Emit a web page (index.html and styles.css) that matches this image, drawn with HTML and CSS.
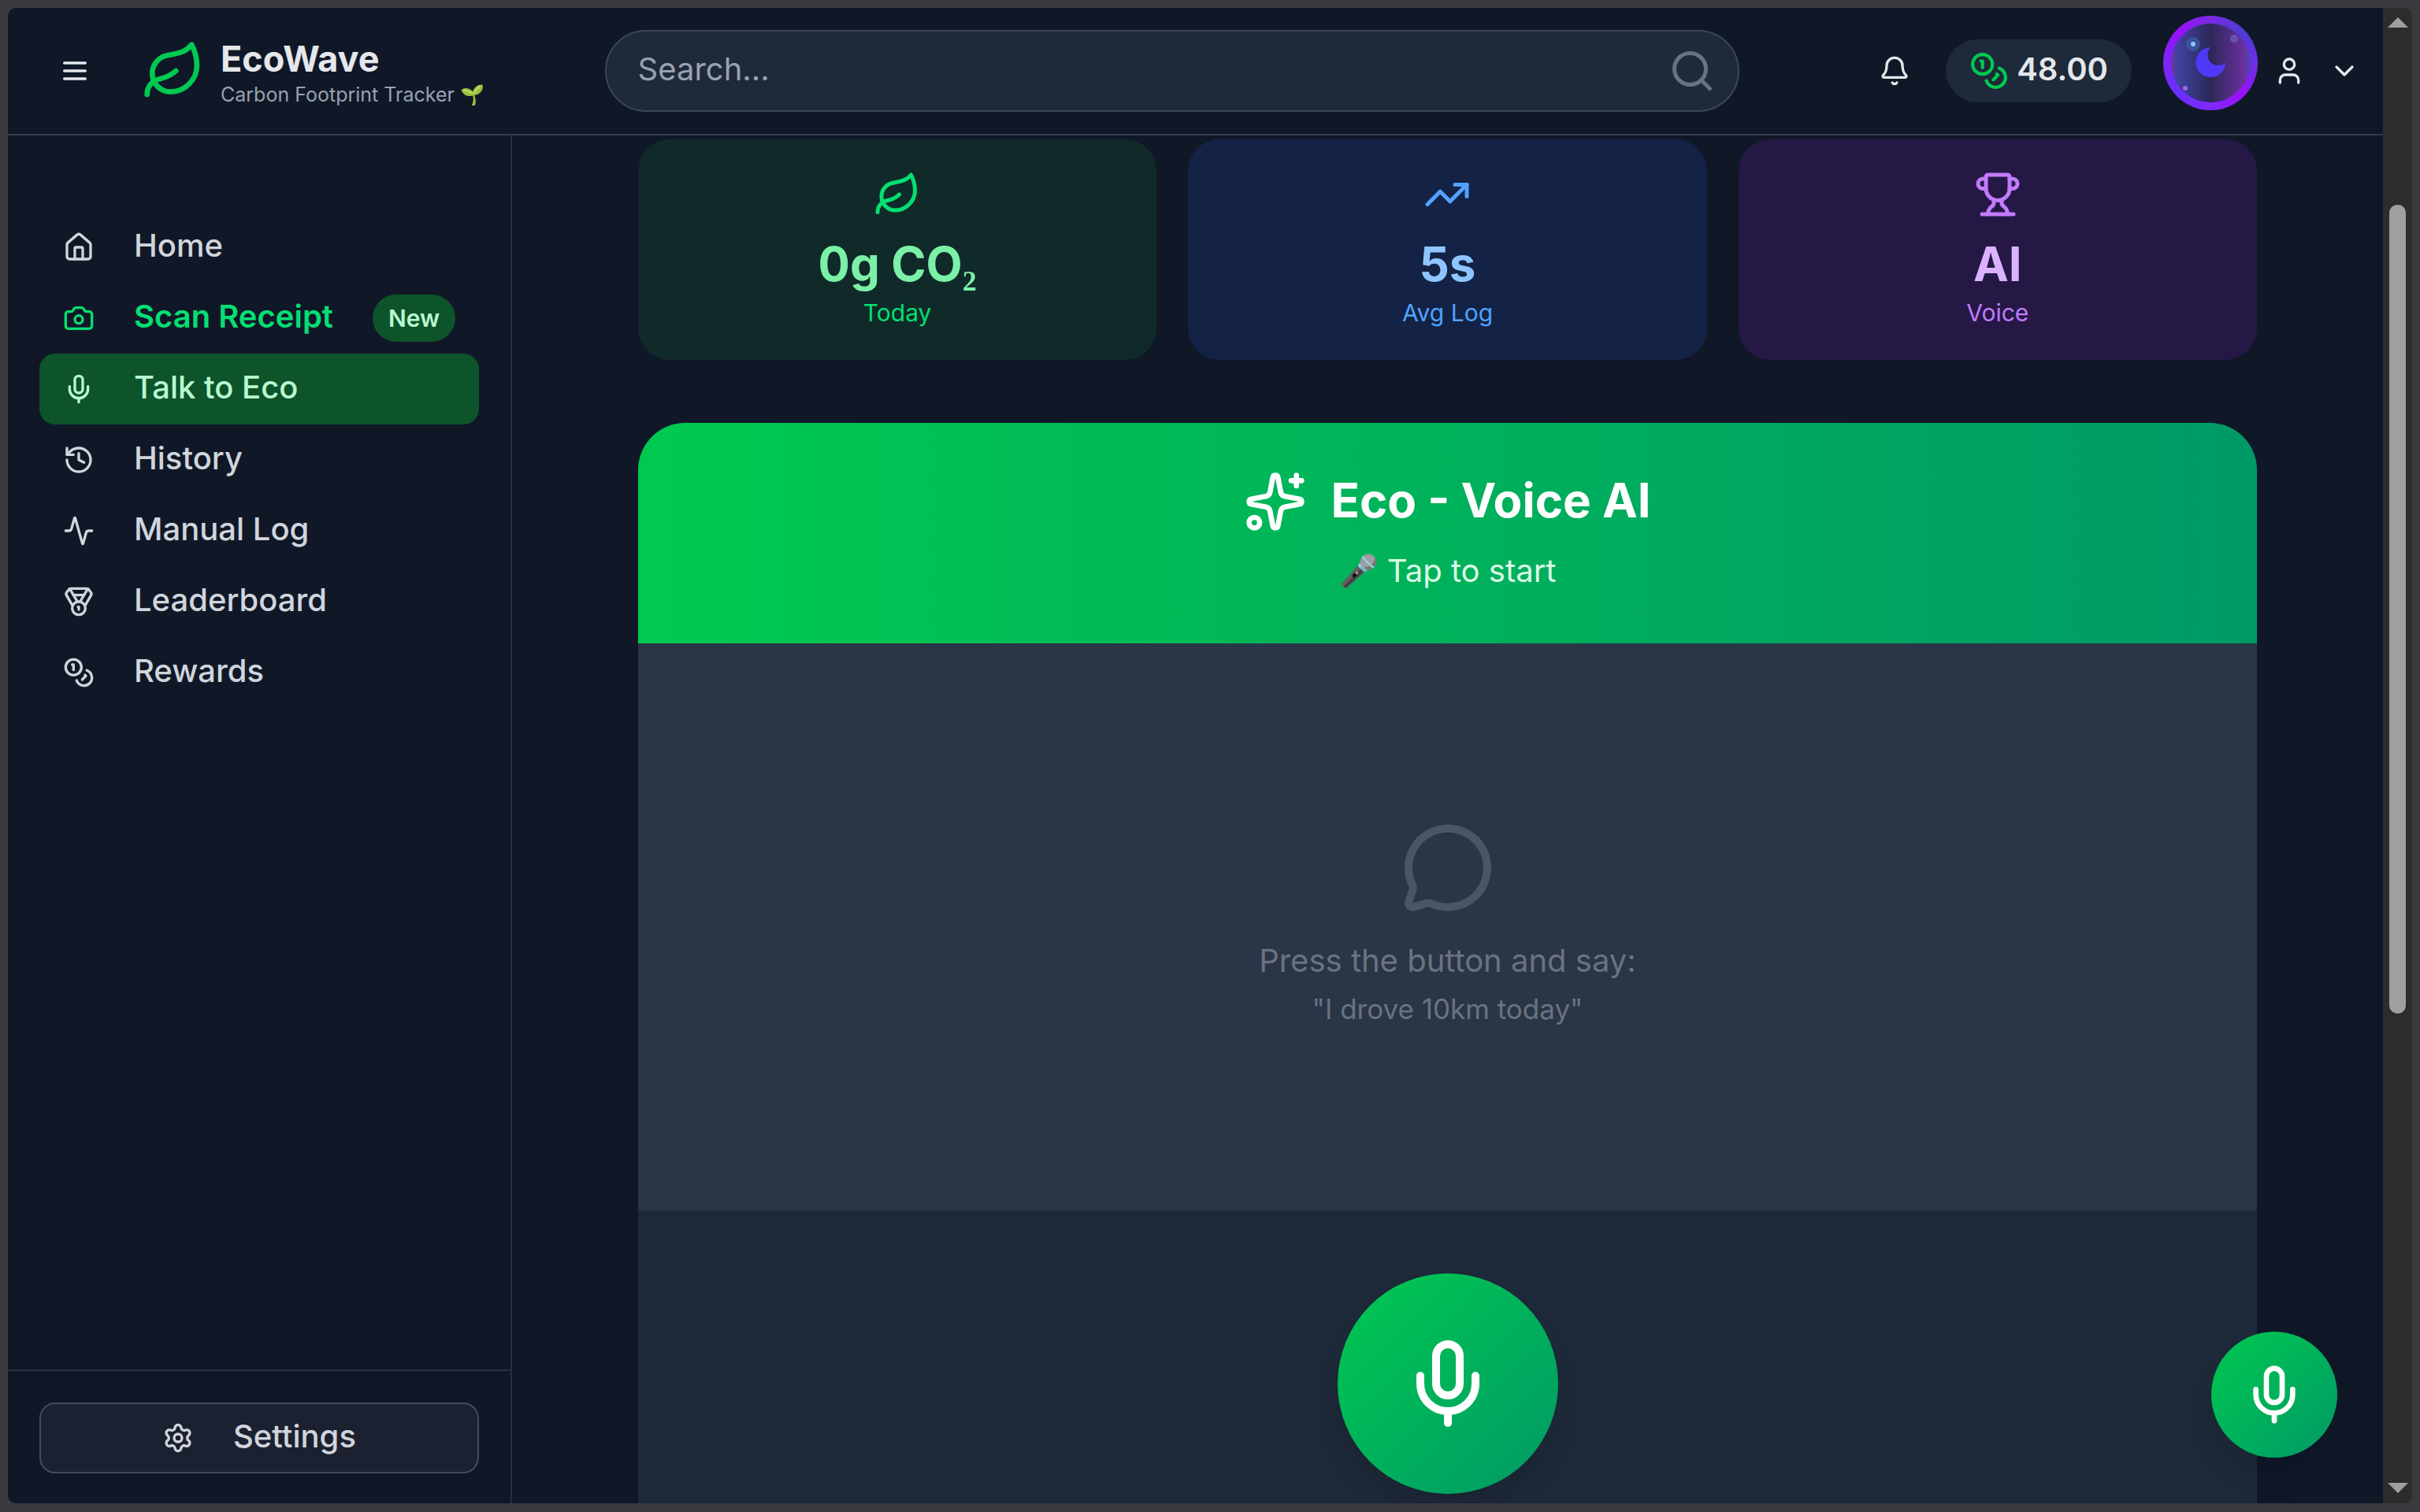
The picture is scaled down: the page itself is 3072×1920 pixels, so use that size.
FILE: index.html
```
<!DOCTYPE html>
<html lang="en">
<head>
    <meta charset="UTF-8">
    <meta name="viewport" content="width=device-width, initial-scale=1.0">
    <title>EcoWave - Carbon Footprint Tracker</title>
    <link rel="stylesheet" href="styles.css">
</head>
<body>

<!-- Icons used more than once -->
<svg class="sprite" aria-hidden="true">
    <symbol id="icon-leaf" viewBox="0 0 24 24">
        <path d="M11 20A7 7 0 0 1 9.8 6.1C15.5 5 17 4.48 19 2c1 2 2 4.18 2 8 0 5.5-4.78 10-10 10Z"/>
        <path d="M2 21c0-3 1.85-5.36 5.08-6C9.5 14.52 12 13 13 12"/>
    </symbol>
    <symbol id="icon-mic" viewBox="0 0 24 24">
        <path d="M12 19v3"/>
        <path d="M19 10v2a7 7 0 0 1-14 0v-2"/>
        <rect x="9" y="2" width="6" height="13" rx="3"/>
    </symbol>
    <symbol id="icon-coins" viewBox="0 0 24 24">
        <circle cx="8" cy="8" r="6"/>
        <path d="M18.09 10.37A6 6 0 1 1 10.34 18"/>
        <path d="M7 6h1v4"/>
        <path d="m16.71 13.88.7.71-2.82 2.82"/>
    </symbol>
</svg>

<div class="window">
    <div class="app">
        <header class="topbar">
            <div class="brand">
                <button class="icon-button" type="button" aria-label="Toggle menu">
                    <svg class="icon" viewBox="0 0 24 24"><path d="M4 6h16M4 12h16M4 18h16"/></svg>
                </button>
                <a class="logo" href="#home">
                    <svg class="icon logo-icon"><use href="#icon-leaf"/></svg>
                    <span class="logo-text">
                        <span class="logo-name">EcoWave</span>
                        <span class="logo-tagline">Carbon Footprint Tracker 🌱</span>
                    </span>
                </a>
            </div>

            <form class="search" role="search">
                <input class="label" type="search" placeholder="Search..." aria-label="Search">
                <button class="search-button" type="button" aria-label="Submit search">
                    <svg class="icon icon-card" viewBox="0 0 24 24"><circle cx="11" cy="11" r="8"/><path d="m21 21-4.34-4.34"/></svg>
                </button>
            </form>

            <div class="actions">
                <button class="icon-button" type="button" aria-label="Notifications">
                    <svg class="icon" viewBox="0 0 24 24">
                        <path d="M10.268 21a2 2 0 0 0 3.464 0"/>
                        <path d="M3.262 15.326A1 1 0 0 0 4 17h16a1 1 0 0 0 .74-1.673C19.41 13.956 18 12.499 18 8A6 6 0 0 0 6 8c0 4.499-1.411 5.956-2.738 7.326"/>
                    </svg>
                </button>
                <div class="balance">
                    <svg class="icon balance-icon"><use href="#icon-coins"/></svg>
                    <span class="label">48.00</span>
                </div>
                <button class="theme-toggle" type="button" aria-label="Toggle theme">
                    <svg viewBox="0 0 120 120">
                        <defs>
                            <linearGradient id="night">
                                <stop offset="0" stop-color="#4547b0"/>
                                <stop offset="0.5" stop-color="#2b2858"/>
                                <stop offset="1" stop-color="#7432a8"/>
                            </linearGradient>
                        </defs>
                        <circle cx="60" cy="60" r="50" fill="url(#night)"/>
                        <path d="M14 46q-5 14 0 28" fill="none" stroke="#7a2e9c" stroke-width="3"/>
                        <path d="M106 46q5 14 0 28" fill="none" stroke="#4547b0" stroke-width="3"/>
                        <circle cx="38" cy="36" r="9" fill="#3f6fb5" opacity="0.5"/>
                        <circle cx="38" cy="36" r="3" fill="#8ec5ff"/>
                        <circle cx="90" cy="29" r="5" fill="#6a5cc0" opacity="0.8"/>
                        <circle cx="28" cy="92" r="3" fill="#a06be0"/>
                        <path transform="translate(35 34) scale(2.1)" fill="#4f39f6" d="M12 3a6 6 0 0 0 9 9 9 9 0 1 1-9-9Z"/>
                    </svg>
                </button>
                <button class="account" type="button" aria-label="Account menu">
                    <svg class="icon" viewBox="0 0 24 24"><path d="M19 21v-2a4 4 0 0 0-4-4H9a4 4 0 0 0-4 4v2"/><circle cx="12" cy="7" r="4"/></svg>
                    <svg class="icon" viewBox="0 0 24 24"><path d="m6 9 6 6 6-6"/></svg>
                </button>
            </div>
        </header>

        <div class="layout">
            <aside class="sidebar">
                <nav>
                    <ul class="menu">
                        <li><a href="#home">
                            <svg class="icon" viewBox="0 0 24 24"><path d="M15 21v-8a1 1 0 0 0-1-1h-4a1 1 0 0 0-1 1v8"/><path d="M3 10a2 2 0 0 1 .709-1.528l7-5.999a2 2 0 0 1 2.582 0l7 5.999A2 2 0 0 1 21 10v9a2 2 0 0 1-2 2H5a2 2 0 0 1-2-2z"/></svg>
                            <span class="label">Home</span>
                        </a></li>
                        <li><a class="highlight" href="#scan">
                            <svg class="icon" viewBox="0 0 24 24"><path d="M13.997 4a2 2 0 0 1 1.76 1.05l.486.9A2 2 0 0 0 18.003 7H20a2 2 0 0 1 2 2v9a2 2 0 0 1-2 2H4a2 2 0 0 1-2-2V9a2 2 0 0 1 2-2h1.997a2 2 0 0 0 1.759-1.048l.489-.904A2 2 0 0 1 10.004 4z"/><circle cx="12" cy="13" r="3"/></svg>
                            <span class="label">Scan Receipt</span>
                            <span class="badge">New</span>
                        </a></li>
                        <li><a class="active" href="#talk" aria-current="page">
                            <svg class="icon"><use href="#icon-mic"/></svg>
                            <span class="label">Talk to Eco</span>
                        </a></li>
                        <li><a href="#history">
                            <svg class="icon" viewBox="0 0 24 24"><path d="M3 12a9 9 0 1 0 9-9 9.75 9.75 0 0 0-6.74 2.74L3 8"/><path d="M3 3v5h5"/><path d="M12 7v5l4 2"/></svg>
                            <span class="label">History</span>
                        </a></li>
                        <li><a href="#log">
                            <svg class="icon" viewBox="0 0 24 24"><path d="M22 12h-2.48a2 2 0 0 0-1.93 1.46l-2.35 8.36a.25.25 0 0 1-.48 0L9.24 2.18a.25.25 0 0 0-.48 0l-2.35 8.36A2 2 0 0 1 4.49 12H2"/></svg>
                            <span class="label">Manual Log</span>
                        </a></li>
                        <li><a href="#leaderboard">
                            <svg class="icon" viewBox="0 0 24 24"><path d="M7.21 15 2.66 7.14a2 2 0 0 1 .13-2.2L4.4 2.8A2 2 0 0 1 6 2h12a2 2 0 0 1 1.6.8l1.6 2.14a2 2 0 0 1 .14 2.2L16.79 15"/><path d="M11 12 5.12 2.2"/><path d="m13 12 5.88-9.8"/><path d="M8 7h8"/><circle cx="12" cy="17" r="5"/><path d="M12 18v-2h-.5"/></svg>
                            <span class="label">Leaderboard</span>
                        </a></li>
                        <li><a href="#rewards">
                            <svg class="icon"><use href="#icon-coins"/></svg>
                            <span class="label">Rewards</span>
                        </a></li>
                    </ul>
                </nav>
                <div class="sidebar-footer">
                    <button class="settings" type="button">
                        <svg class="icon" viewBox="0 0 24 24"><path d="M9.671 4.136a2.34 2.34 0 0 1 4.659 0 2.34 2.34 0 0 0 3.319 1.915 2.34 2.34 0 0 1 2.33 4.033 2.34 2.34 0 0 0 0 3.831 2.34 2.34 0 0 1-2.33 4.033 2.34 2.34 0 0 0-3.319 1.915 2.34 2.34 0 0 1-4.659 0 2.34 2.34 0 0 0-3.32-1.915 2.34 2.34 0 0 1-2.33-4.033 2.34 2.34 0 0 0 0-3.831A2.34 2.34 0 0 1 6.35 6.051a2.34 2.34 0 0 0 3.319-1.915"/><circle cx="12" cy="12" r="3"/></svg>
                        <span class="label">Settings</span>
                    </button>
                </div>
            </aside>

            <main class="content">
                <section class="stats">
                    <div class="stat stat-green">
                        <svg class="icon icon-card"><use href="#icon-leaf"/></svg>
                        <p class="stat-value">0g CO<span class="subscript">₂</span></p>
                        <p class="stat-label">Today</p>
                    </div>
                    <div class="stat stat-blue">
                        <svg class="icon icon-card" viewBox="0 0 24 24"><path d="M16 7h6v6"/><path d="m22 7-8.5 8.5-5-5L2 17"/></svg>
                        <p class="stat-value">5s</p>
                        <p class="stat-label">Avg Log</p>
                    </div>
                    <div class="stat stat-purple">
                        <svg class="icon icon-card" viewBox="0 0 24 24"><path d="M10 14.66v1.626a2 2 0 0 1-.976 1.696A5 5 0 0 0 7 21.978"/><path d="M14 14.66v1.626a2 2 0 0 0 .976 1.696A5 5 0 0 1 17 21.978"/><path d="M18 9h1.5a1 1 0 0 0 0-5H18"/><path d="M4 22h16"/><path d="M6 9a6 6 0 0 0 12 0V3a1 1 0 0 0-1-1H7a1 1 0 0 0-1 1z"/><path d="M6 9H4.5a1 1 0 0 1 0-5H6"/></svg>
                        <p class="stat-value">AI</p>
                        <p class="stat-label">Voice</p>
                    </div>
                </section>

                <section class="voice">
                    <div class="voice-header">
                        <h1>
                            <svg class="icon icon-large" viewBox="0 0 24 24"><path d="M11.017 2.814a1 1 0 0 1 1.966 0l1.051 5.558a2 2 0 0 0 1.594 1.594l5.558 1.051a1 1 0 0 1 0 1.966l-5.558 1.051a2 2 0 0 0-1.594 1.594l-1.051 5.558a1 1 0 0 1-1.966 0l-1.051-5.558a2 2 0 0 0-1.594-1.594l-5.558-1.051a1 1 0 0 1 0-1.966l5.558-1.051a2 2 0 0 0 1.594-1.594z"/><path d="M20 2v4"/><path d="M22 4h-4"/><circle cx="4" cy="20" r="2"/></svg>
                            <span class="label">Eco - Voice AI</span>
                        </h1>
                        <p>🎤 Tap to start</p>
                    </div>
                    <div class="voice-empty">
                        <svg class="icon icon-huge" viewBox="0 0 24 24"><path d="M2.992 16.342a2 2 0 0 1 .094 1.167l-1.065 3.29a1 1 0 0 0 1.236 1.168l3.413-.998a2 2 0 0 1 1.099.092 10 10 0 1 0-4.777-4.719"/></svg>
                        <p>Press the button and say:</p>
                        <p class="hint">"I drove 10km today"</p>
                    </div>
                    <div class="voice-controls">
                        <button class="mic-button mic-main" type="button" aria-label="Start talking">
                            <svg class="icon icon-huge"><use href="#icon-mic"/></svg>
                        </button>
                    </div>
                </section>
            </main>
        </div>

        <button class="mic-button mic-floating" type="button" aria-label="Talk to Eco">
            <svg class="icon icon-large"><use href="#icon-mic"/></svg>
        </button>
    </div>

    <div class="scrollbar" aria-hidden="true">
        <svg viewBox="0 0 26 13"><path d="M13 0 26 13H0z"/></svg>
        <div class="scroll-track"><div class="scroll-thumb"></div></div>
        <svg viewBox="0 0 26 13"><path d="M0 0h26L13 13z"/></svg>
    </div>
</div>

</body>
</html>
```
FILE: styles.css
```
* {
    box-sizing: border-box;
}
body {
    margin: 0;
    background: #3b3a3e;
    color: #e5e7eb;
    font-family: Inter, sans-serif;
    font-size: 40px;
    line-height: 60px;
}
p, h1, ul {
    margin: 0;
    padding: 0;
}
a {
    color: inherit;
    text-decoration: none;
}
button {
    display: flex;
    align-items: center;
    justify-content: center;
    padding: 0;
    border: 0;
    background: none;
    color: inherit;
    font: inherit;
    cursor: pointer;
}
.sprite {
    display: none;
}

/* Icons */
.icon {
    width: 40px;
    height: 40px;
    flex-shrink: 0;
    fill: none;
    stroke: currentColor;
    stroke-width: 2;
    stroke-linecap: round;
    stroke-linejoin: round;
}
.icon-card {
    width: 60px;
    height: 60px;
}
.icon-large {
    width: 80px;
    height: 80px;
}
.icon-huge {
    width: 120px;
    height: 120px;
}

/* Text that sits beside an icon */
.label {
    padding: 0 0 4px;
    white-space: nowrap;
}

/* Window */
.window {
    display: flex;
    height: 100vh;
    padding: 10px 10px 11px;
}
.app {
    position: relative;
    display: flex;
    flex-direction: column;
    flex: 1;
    min-width: 0;
    overflow: hidden;
    background: #101828;
    border-radius: 10px 0 0 10px;
}

/* Top bar */
.topbar {
    display: flex;
    align-items: center;
    justify-content: space-between;
    flex-shrink: 0;
    height: 162px;
    padding: 0 29px 0 40px;
    border-bottom: 2px solid #323d4e;
}
.brand, .logo, .actions {
    display: flex;
    align-items: center;
}
.brand {
    gap: 40px;
}
.icon-button {
    width: 90px;
    height: 90px;
}
.logo {
    gap: 20px;
}
.logo-icon {
    width: 80px;
    height: 80px;
    color: #00c950;
}
.logo-text {
    display: flex;
    flex-direction: column;
    padding-top: 10px;
}
.logo-name {
    font-size: 45px;
    font-weight: 700;
    line-height: 50px;
}
.logo-tagline {
    color: #99a1af;
    font-size: 25px;
    line-height: 40px;
    white-space: nowrap;
}
.search {
    display: flex;
    align-items: center;
    width: 1440px;
    height: 104px;
    padding: 0 28px 0 40px;
    background: #1e2939;
    border: 2px solid #3b4656;
    border-radius: 52px;
}
.search input {
    flex: 1;
    min-width: 0;
    border: 0;
    outline: 0;
    background: none;
    color: inherit;
    font: inherit;
}
.search input::placeholder {
    color: #99a1af;
}
.search-button {
    color: #6a7282;
}
.balance {
    display: flex;
    align-items: center;
    gap: 10px;
    height: 80px;
    margin: 0 40px 0 20px;
    padding: 0 30px;
    background: #1e2939;
    border-radius: 40px;
    font-weight: 600;
}
.balance-icon {
    width: 50px;
    height: 50px;
    color: #00c950;
}
.theme-toggle {
    width: 120px;
    height: 120px;
    margin: 0 20px 20px 0;
    border-radius: 50%;
    background: conic-gradient(#7a2be0, #4f3bd6 45deg, #6b30e0 90deg, #9810fa 135deg, #7f2af8 180deg, #6a2fff 225deg, #7a28f8 270deg, #9a10fa 315deg, #7a2be0);
}
.theme-toggle svg {
    width: 120px;
    height: 120px;
}
.account {
    gap: 30px;
}

/* Sidebar */
.layout {
    display: flex;
    flex: 1;
    min-height: 0;
}
.sidebar {
    display: flex;
    flex-direction: column;
    justify-content: space-between;
    flex-shrink: 0;
    width: 640px;
    border-right: 2px solid #263143;
}
.menu {
    padding: 97px 40px 0;
    list-style: none;
}
.menu a {
    display: flex;
    align-items: center;
    gap: 50px;
    height: 90px;
    padding: 0 30px;
    border-radius: 20px;
    color: #d1d5dc;
    font-weight: 500;
}
.menu .highlight {
    color: #05df72;
    font-weight: 600;
}
.menu .active {
    background: #0d542b;
    color: #b9f8cf;
}
.badge {
    margin-left: auto;
    padding: 0 20px;
    border-radius: 30px;
    background: #0d542b;
    color: #b9f8cf;
    font-size: 30px;
    font-weight: 600;
}
.sidebar-footer {
    padding: 40px 40px 38px;
    border-top: 2px solid #263143;
}
.settings {
    gap: 50px;
    width: 100%;
    height: 90px;
    background: #1b2130;
    border: 2px solid #414b5a;
    border-radius: 20px;
    color: #d1d5dc;
    font-weight: 500;
}

/* Content */
.content {
    display: flex;
    flex-direction: column;
    gap: 80px;
    flex: 1;
    min-width: 0;
    overflow: hidden;
    padding: 5px 160px 0;
}
.stats {
    display: grid;
    grid-template-columns: repeat(3, 1fr);
    gap: 40px;
}
.stat {
    display: flex;
    flex-direction: column;
    align-items: center;
    padding: 40px;
    border-radius: 40px;
}
.stat-value {
    margin: 18px 0 2px;
    font-size: 60px;
    font-weight: 700;
    line-height: 80px;
}
.stat-label {
    font-size: 30px;
    line-height: 40px;
}
.subscript {
    font-family: "Liberation Serif", serif;
    line-height: 1;
}
.stat-green {
    background: #102a29;
    color: #05df72;
}
.stat-green .stat-value {
    color: #7bf1a8;
}
.stat-blue {
    background: #132245;
    color: #51a2ff;
}
.stat-blue .stat-value {
    color: #8ec5ff;
}
.stat-purple {
    background: #251845;
    color: #c27aff;
}
.stat-purple .stat-value {
    color: #dab2ff;
}

/* Voice assistant */
.voice {
    border-radius: 60px;
    background: #1e2939;
}
.voice-header {
    padding: 60px 60px 62px;
    border-radius: 60px 60px 0 0;
    background: linear-gradient(to right, #00c950, #009966);
    color: #dcfce7;
    text-align: center;
}
.voice-header h1 {
    display: flex;
    align-items: center;
    justify-content: center;
    gap: 30px;
    height: 80px;
    margin-bottom: 18px;
    color: #fff;
    font-size: 60px;
    font-weight: 700;
    line-height: 80px;
}
.voice-empty {
    display: flex;
    flex-direction: column;
    align-items: center;
    justify-content: center;
    gap: 6px;
    height: 720px;
    padding-bottom: 6px;
    background: #2a3546;
    color: #6a7282;
}
.voice-empty .icon {
    margin-bottom: 22px;
    color: #4a5565;
}
.hint {
    font-size: 35px;
    line-height: 50px;
}
.voice-controls {
    display: flex;
    justify-content: center;
    padding: 80px;
}
.mic-button {
    border-radius: 50%;
    background: linear-gradient(to bottom right, #00c950, #009966);
    color: #fff;
    box-shadow: 0 25px 40px -8px rgba(0, 0, 0, 0.15);
}
.mic-main {
    width: 280px;
    height: 280px;
}
.mic-floating {
    position: absolute;
    right: 58px;
    bottom: 58px;
    width: 160px;
    height: 160px;
}

/* Scrollbar */
.scrollbar {
    display: flex;
    flex-direction: column;
    align-items: center;
    flex-shrink: 0;
    width: 37px;
    padding: 12px 0 13px;
    background: #2c2c2c;
    border-radius: 0 10px 10px 0;
}
.scrollbar svg {
    width: 26px;
    height: 13px;
    fill: #9f9f9f;
}
.scroll-track {
    display: grid;
    grid-template-rows: 225fr 1027fr 596fr;
    flex: 1;
}
.scroll-thumb {
    grid-row: 2;
    width: 21px;
    border-radius: 10px;
    background: #9f9f9f;
}
```
